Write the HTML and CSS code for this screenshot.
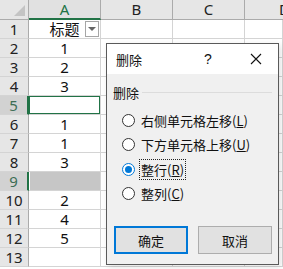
FILE: index.html
```html
<!DOCTYPE html>
<html lang="zh">
<head>
  <meta charset="UTF-8" />
  <title>删除</title>
  <link rel="stylesheet" href="styles.css">
</head>
<body>
  <!-- 工作表 -->
  <div class="sheet">
    <div class="corner"><span class="tri"></span></div>
    <div class="col-h sel">A</div>
    <div class="col-h">B</div>
    <div class="col-h">C</div>
    <div class="col-h last">D</div>

    <div class="rh">1</div><div class="cell a">标题<span class="filter"><span class="arrow"></span></span></div><div class="cell"></div><div class="cell"></div><div class="cell"></div>
    <div class="rh">2</div><div class="cell a">1</div><div class="cell"></div><div class="cell"></div><div class="cell"></div>
    <div class="rh">3</div><div class="cell a">2</div><div class="cell"></div><div class="cell"></div><div class="cell"></div>
    <div class="rh">4</div><div class="cell a">3</div><div class="cell"></div><div class="cell"></div><div class="cell"></div>
    <div class="rh on">5</div><div class="cell a active"></div><div class="cell"></div><div class="cell"></div><div class="cell"></div>
    <div class="rh">6</div><div class="cell a">1</div><div class="cell"></div><div class="cell"></div><div class="cell"></div>
    <div class="rh">7</div><div class="cell a">1</div><div class="cell"></div><div class="cell"></div><div class="cell"></div>
    <div class="rh">8</div><div class="cell a">3</div><div class="cell"></div><div class="cell"></div><div class="cell"></div>
    <div class="rh on">9</div><div class="cell a picked"></div><div class="cell"></div><div class="cell"></div><div class="cell"></div>
    <div class="rh">10</div><div class="cell a">2</div><div class="cell"></div><div class="cell"></div><div class="cell"></div>
    <div class="rh">11</div><div class="cell a">4</div><div class="cell"></div><div class="cell"></div><div class="cell"></div>
    <div class="rh">12</div><div class="cell a">5</div><div class="cell"></div><div class="cell"></div><div class="cell"></div>
    <div class="rh">13</div><div class="cell a"></div><div class="cell"></div><div class="cell"></div><div class="cell"></div>
  </div>

  <!-- 删除 对话框 -->
  <div class="dialog">
    <div class="title-bar">
      <span class="title">删除</span>
      <span class="help">?</span>
      <svg class="close" width="12" height="12" viewBox="0 0 12 12"><path d="M1 1L11 11M11 1L1 11" stroke="#111" stroke-width="1.1" fill="none"/></svg>
    </div>
    <div class="body">
      <div class="group">删除<span class="line"></span></div>
      <label class="opt"><span class="radio"></span>右侧单元格左移(<u>L</u>)</label>
      <label class="opt"><span class="radio"></span>下方单元格上移(<u>U</u>)</label>
      <label class="opt"><span class="radio checked"></span><span class="focus">整行(<u>R</u>)</span></label>
      <label class="opt"><span class="radio"></span>整列(<u>C</u>)</label>
      <div class="buttons">
        <button class="btn primary" type="button">确定</button>
        <button class="btn" type="button">取消</button>
      </div>
    </div>
  </div>
</body>
</html>
```

FILE: styles.css
```css
/* 基础 */
body {
  margin: 0;
  overflow: hidden;
  background: #fff;
  font-family: "Noto Sans", "Noto Sans CJK SC", sans-serif;
  color: #111;
}

/* 工作表网格 */
.sheet {
  display: grid;
  grid-template-columns: 29px 72px 72px 72px 38px;
  grid-template-rows: 20px repeat(13, 19px);
}
.corner, .col-h, .rh, .cell {
  box-sizing: border-box;
  border-right: 1px solid #d4d4d4;
  border-bottom: 1px solid #d4d4d4;
}
.corner {
  position: relative;
  background: #e6e6e6;
  border-right-color: #ababab;
  border-bottom-color: #ababab;
}
.corner .tri {
  position: absolute;
  right: 3px; bottom: 3px;
  width: 0; height: 0;
  border-left: 11px solid transparent;
  border-bottom: 11px solid #c4c4c4;
}
.col-h {
  background: #e6e6e6;
  border-right-color: #ababab;
  border-bottom-color: #ababab;
  font-size: 15px;
  line-height: 19px;
  text-align: center;
  color: #222;
  overflow: hidden;
}
.col-h.last {
  text-align: left;
  padding-left: 34px;
  border-right: none;
}
.col-h.sel {
  background: #e1e1e1;
  color: #217346;
  border-bottom: 2px solid #217346;
}
.rh {
  background: #e6e6e6;
  border-right-color: #ababab;
  font-size: 15px;
  line-height: 18px;
  text-align: center;
  color: #222;
}
.rh.on {
  background: #d2d2d2;
  color: #3d6e55;
  border-right: 2px solid #217346;
}
.cell {
  font-size: 15px;
  line-height: 18px;
  text-align: center;
}
.cell.a { position: relative; }
.cell.active { box-shadow: inset 0 0 0 1px #217346; }
.cell.picked {
  background: #c6c6c6;
  box-shadow: inset 1px 0 0 #fff;
}

/* 筛选按钮 */
.filter {
  position: absolute;
  right: 1px; top: 1px;
  width: 14px; height: 16px;
  box-sizing: border-box;
  border: 1px solid #a6a6a6;
  background: #fff;
  display: flex; align-items: center; justify-content: center;
}
.filter .arrow {
  width: 0; height: 0;
  border-left: 4px solid transparent;
  border-right: 4px solid transparent;
  border-top: 4px solid #666;
}

/* 对话框 */
.dialog {
  position: absolute;
  left: 106px; top: 43px;
  width: 173px; height: 222px;
  box-sizing: border-box;
  border: 1px solid #5a5a5a;
  background: #f0f0f0;
  box-shadow: 2px 2px 6px rgba(0,0,0,0.12);
  font-size: 13px;
  font-family: "Noto Sans CJK SC", sans-serif;
}
.title-bar {
  height: 30px;
  background: #fff;
  display: flex;
  align-items: center;
  padding: 0 0 0 9px;
}
.title { flex: 1; }
.help { width: 16px; margin-right: 30px; font-family: "Liberation Sans", sans-serif; font-size: 14px; }
.close { margin-right: 16px; }

.body { padding: 8px 6px 0 6px; }
.group {
  display: flex;
  align-items: center;
  height: 20px;
}
.group .line {
  flex: 1;
  height: 1px;
  background: #dcdcdc;
  margin-left: 3px;
}
.opt {
  display: flex;
  align-items: center;
  height: 24.5px;
  padding-left: 9px;
}
.opt:first-of-type { margin-top: 6px; }
.radio {
  width: 13px; height: 13px;
  box-sizing: border-box;
  border: 1px solid #333;
  border-radius: 50%;
  background: #fff;
  margin-right: 6px;
  position: relative;
}
.radio.checked { border-color: #0078d7; }
.radio.checked::after {
  content: "";
  position: absolute;
  left: 2px; top: 2px;
  width: 7px; height: 7px;
  border-radius: 50%;
  background: #0078d7;
}
.focus {
  outline: 1px dotted #222;
  outline-offset: 0;
  padding: 0 1px;
  margin-left: -1px;
}
u { text-underline-offset: 1px; }

.buttons {
  display: flex;
  gap: 10px;
  margin-top: 20px;
  padding-left: 1px;
}
.btn {
  width: 74px; height: 28px;
  box-sizing: border-box;
  border: 1px solid #adadad;
  background: #e1e1e1;
  font-family: "Noto Sans CJK SC", sans-serif;
  font-size: 13px;
  color: #111;
  padding: 0;
}
.btn.primary { border: 2px solid #0078d7; }
```
